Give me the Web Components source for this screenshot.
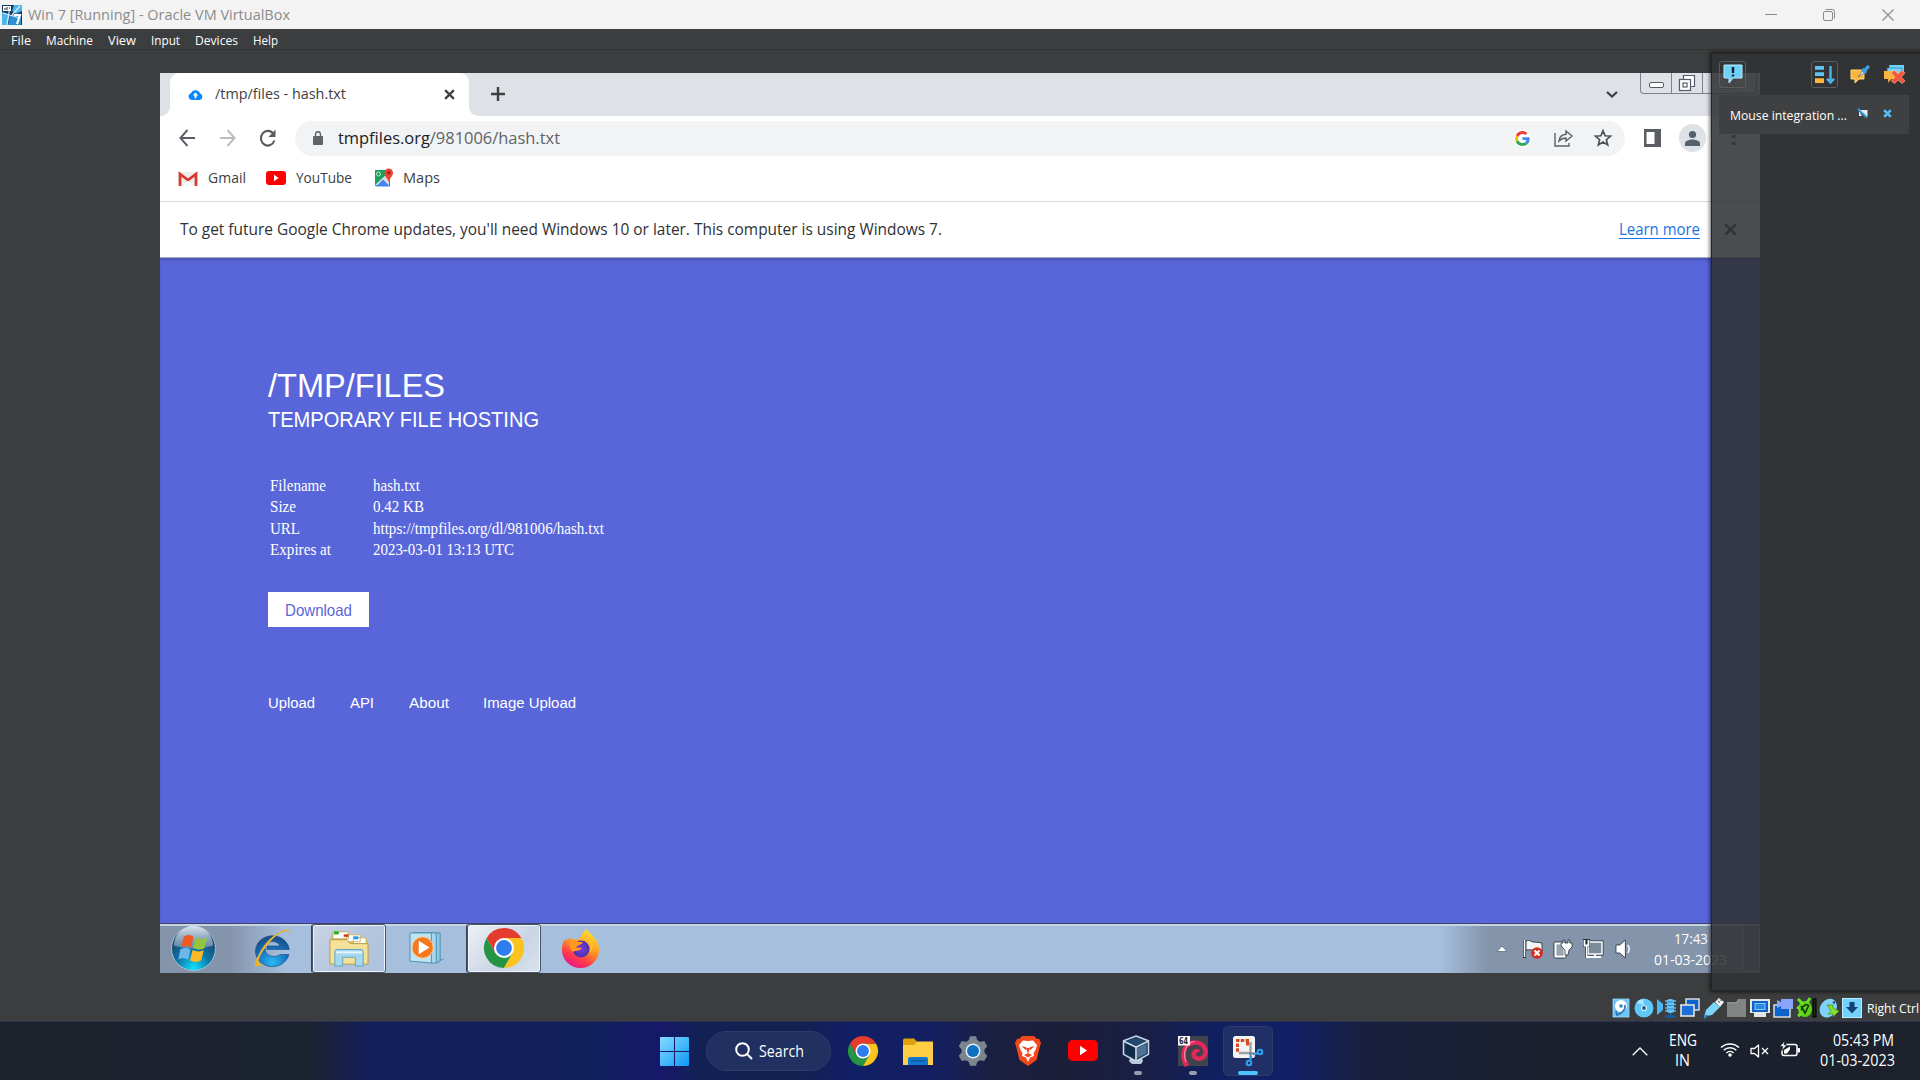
<!DOCTYPE html>
<html lang="en">
<head>
<meta charset="utf-8">
<title>Win 7 [Running] - Oracle VM VirtualBox</title>
<style>
html,body{margin:0;padding:0}
body{width:1920px;height:1080px;overflow:hidden;background:#3c3d3e;font-family:"Open Sans","Noto Sans",sans-serif}
</style>
</head>
<body>
<desk-top></desk-top>
<script>
const ICONS = {
vbwin:['0 0 20 20','<rect width="20" height="20" rx="1" fill="#1565a8"/><path d="M0 0h20v20H0z" fill="#123a5e"/><path d="M0 7l8 3-3 10H0zM12 0h8v6l-6 3-4-3z" fill="#4fb4ea"/><path d="M8 11l5-2 6 3v8H6z" fill="#2f8fd0"/><path d="M8 1L5 20M1 8l17 5M18 1l-8 9" stroke="#d8f0ff" stroke-width="1.2"/><rect x="1" y="1" width="8" height="5" fill="#fff"/><path d="M2 4h2M5 2v3M7 3h1" stroke="#222"/><path d="M12 10h6l-3 9" fill="none" stroke="#fff" stroke-width="2.2"/>'],
min:['0 0 12 12','<path d="M0 5.5h12" stroke="#8a8a8a"/>'],
restore:['0 0 12 12','<rect x=".5" y="2.5" width="9" height="9" rx="1.5" fill="none" stroke="#8a8a8a"/><path d="M2.5 .5h7a2 2 0 0 1 2 2v7" fill="none" stroke="#8a8a8a"/>'],
close:['0 0 12 12','<path d="M.5 .5l11 11M11.5 .5l-11 11" stroke="#8a8a8a" stroke-width="1.1"/>'],
cloud:['0 0 16 12','<path d="M4 12A3.8 3.8 0 0 1 3.3 4.6 5 5 0 0 1 12.8 5 3.6 3.6 0 0 1 12.4 12z" fill="#0a84ff"/><path d="M8 3.6L5 7h2v3h2V7h2z" fill="#fff"/>'],
x:['0 0 10 10','<path d="M1 1l8 8M9 1L1 9" stroke="#3c4043" stroke-width="2"/>'],
plus:['0 0 16 16','<path d="M8 1v14M1 8h14" stroke="#3c4043" stroke-width="2.4"/>'],
back:['0 0 18 18','<path d="M17 9H2M9 1L1.5 9 9 17" fill="none" stroke="#5a5e63" stroke-width="2"/>'],
fwd:['0 0 18 18','<path d="M1 9h15M9 1l7.500 8L9 17" fill="none" stroke="#babcbe" stroke-width="2"/>'],
reload:['0 0 18 18','<path d="M15.300 5A7.300 7.300 0 1 0 16.300 11.500" fill="none" stroke="#5a5e63" stroke-width="2.200"/><path d="M17.500 .5v7.500H10z" fill="#5a5e63"/>'],
lock:['0 0 11 14','<rect y="5" width="11" height="9" rx="1" fill="#5f6368"/><path d="M2.800 6V3.500a2.700 2.700 0 0 1 5.400 0V6" fill="none" stroke="#5f6368" stroke-width="1.500"/>'],
gg:['0 0 48 48','<circle cx="24" cy="24" r="28" fill="#fff"/><path fill="#ea4335" d="M24 9.500c3.500 0 6.700 1.200 9.200 3.600l6.900-6.900C35.900 2.400 30.500 0 24 0 14.600 0 6.500 5.400 2.600 13.200l8 6.200C12.400 13.700 17.700 9.500 24 9.500z"/><path fill="#4285f4" d="M47 24.500c0-1.600-.2-3.100-.4-4.500H24v9h12.900c-.6 3-2.200 5.500-4.700 7.200l7.700 6C44.400 38 47 31.800 47 24.500z"/><path fill="#fbbc05" d="M10.500 28.600a14.500 14.500 0 0 1 0-9.200l-8-6.200a24 24 0 0 0 0 21.600z"/><path fill="#34a853" d="M24 48c6.500 0 11.900-2.100 15.900-5.800l-7.700-6c-2.200 1.500-4.900 2.300-8.200 2.300-6.300 0-11.600-4.200-13.500-9.900l-8 6.200C6.500 42.600 14.600 48 24 48z"/>'],
share:['0 0 19 18','<path d="M1 4v13h14v-3" fill="none" stroke="#5f6368" stroke-width="1.400"/><path d="M5 12c.5-4 3-6.500 7-6.800V2l6 5-6 5V9c-3 0-5 1-7 3z" fill="none" stroke="#5f6368" stroke-width="1.500"/>'],
star:['0 0 18 18','<path d="M9 1.800l2.100 5 5.400.4-4.100 3.500 1.300 5.300L9 13.100 4.300 16l1.300-5.300L1.500 7.200l5.400-.4z" fill="none" stroke="#4f5358" stroke-width="1.700"/>'],
side:['0 0 17 18','<rect width="17" height="18" fill="#5a5e63"/><rect x="2.500" y="3" width="8" height="12" fill="#fff"/>'],
avatar:['0 0 27 28','<ellipse cx="13.500" cy="14" rx="13.500" ry="14" fill="#dee1e6"/><circle cx="13.500" cy="10.500" r="3.600" fill="#55606f"/><path d="M6 22v-2.500c0-3 5-4 7.500-4s7.500 1 7.500 4V22z" fill="#55606f"/>'],
dots:['0 0 5 12','<rect x=".5" width="4" height="3" fill="#5f6368"/><rect x=".5" y="7" width="4" height="3" fill="#5f6368"/>'],
chev:['0 0 12 7','<path d="M1 1l5 4.500L11 1" fill="none" stroke="#3c4043" stroke-width="2.200"/>'],
gmail:['0 0 20 14','<rect x="1" width="18" height="14" fill="#eee"/><path d="M2 14V2l8 6 8-6v12" fill="none" stroke="#d93a30" stroke-width="2.800"/><path d="M4 14l6-5 6 5z" fill="#fafafa"/>'],
yt:['0 0 30 20','<rect width="30" height="20" rx="4.500" fill="#f00"/><path d="M12 5.500v9l7-4.500z" fill="#fff"/>'],
maps:['0 0 20 19','<rect x="1" y="2" width="15" height="16" fill="#1da05a"/><path d="M1 17L15 4v14z" fill="#d8dce0"/><path d="M2 18.500l7-7 7 7z" fill="#4285f4"/><circle cx="4.500" cy="6" r="2" fill="none" stroke="#bfe8cd"/><path d="M14.500 14c-.5-4-4-5-4-9a4 4.300 0 0 1 8.500 0c0 4-4 5-4.500 9z" fill="#ea4335"/><circle cx="14.700" cy="4.800" r="1.500" fill="#8c1d18"/>'],
w7min:['0 0 15 6','<rect x=".5" y=".5" width="14" height="5" rx="1.500" fill="#fff" stroke="#555b66"/>'],
w7res:['0 0 16 16','<path d="M4.500 4V.5h11v11H12" fill="#fff" stroke="#555b66" stroke-width="1.200"/><rect x=".5" y="4.500" width="11" height="11" fill="#fff" stroke="#555b66" stroke-width="1.200"/><rect x="4" y="8" width="4" height="4" fill="#fff" stroke="#555b66" stroke-width="1.200"/>'],
w7x:['0 0 16 12','<path d="M1 1l6 5-6 5h4l3-3 3 3h4l-5-5 5-5h-4L8 4 5 1z" fill="#fff" stroke="#555b66"/>'],
orb:['0 0 46 46','<defs><radialGradient id="ob" cx=".5" cy=".95" r=".95"><stop offset="0" stop-color="#12e0ff"/><stop offset=".4" stop-color="#0c78a8"/><stop offset=".75" stop-color="#1a4a74"/><stop offset="1" stop-color="#0d2c50"/></radialGradient><linearGradient id="og" x2="0" y2="1"><stop offset="0" stop-color="#dbe6ee"/><stop offset="1" stop-color="#7d9bb2" stop-opacity=".7"/></linearGradient></defs><circle cx="23" cy="23" r="22.500" fill="url(#ob)" stroke="#a3c3d6"/><path d="M3 20A20 20 0 0 1 43 20C32 24 14 24 3 20z" fill="url(#og)"/><path d="M13 11c4-3 7-2 10 0l-2.500 11c-3-2-6-2-10.500 0z" fill="#ee5a24"/><path d="M25 12c4 2 8 2 12 0l-3 11c-4 2-8 1-11.500-.5z" fill="#94c53d"/><path d="M9.500 24c4-2 7-2 10.500 0l-2.500 10.500c-3-2-6-2-10 0z" fill="#6db7ea"/><path d="M22 24.500c4 2 8 2 11.500 0L31 35c-4 2.500-8 2-11.500 0z" fill="#fbb829"/>'],
ie:['0 0 40 38','<defs><radialGradient id="ieb" cx=".5" cy=".85" r=".9"><stop offset="0" stop-color="#2cbaf4"/><stop offset=".5" stop-color="#1670be"/><stop offset="1" stop-color="#1b4674"/></radialGradient></defs><path d="M38 25.500A17 15.500 0 1 1 38.300 20.500H16V17H29a7.500 5.500 0 0 0-15 2.500c0 8 10 10 15 6z" fill="url(#ieb)" stroke="#1b4c80" stroke-width=".6"/><path d="M7 27C0 39 6 39 13 35 5 37 7 30 12 22 20 10 30 1 37 2c2 .5 2 3 1 6 4-8-2-10-11-4C18 9 11 18 7 27z" fill="#e9b32c"/>'],
expl:['0 0 42 38','<path d="M2 8l1-4h8l1 2h9l1 3h16l2 3v22H2z" fill="#d9bf63"/><path d="M4 2h16v7H4zM18 5h14v7H18zM25 8h13v6H25z" fill="#fff" stroke="#c5a954" stroke-width=".8"/><rect x="5" y="1.500" width="5" height="3" fill="#18b418"/><rect x="15" y="4.500" width="5" height="2.500" fill="#c43a22"/><rect x="25" y="6.500" width="5" height="3" fill="#1c9af0"/><path d="M1 10h17l4 4h18v21H1z" fill="#f4e299" stroke="#b99a45"/><path d="M6 37V22a2 2 0 0 1 2-2h25a2 2 0 0 1 2 2v15h-8v-9H14v9z" fill="#a6d9ee" stroke="#5da3c2"/><path d="M7 23h27" stroke="#e2f5fd" stroke-width="2"/>'],
wmp:['0 0 38 34','<path d="M20 26l17 2-8 3-18 0z" fill="#7f98b2"/><path d="M8 1h24v29l-5 2z" fill="#8fc7e2" stroke="#4a90b5"/><path d="M4 1h24v31l-5 0z" fill="#a8d8ec" stroke="#4a90b5"/><path d="M1 1h22v31L1 30z" fill="#bfe3f0" stroke="#4a90b5"/><circle cx="14" cy="16" r="11" fill="#f47a20" stroke="#ffd3a8"/><path d="M10 9v14l11-7z" fill="#fff"/>'],
chrome:['0 0 48 48','<path d="M3.200 12A24 24 0 0 0 24 48L34.400 30 24 24 13.600 30z" fill="#249544"/><path d="M44.800 12A24 24 0 0 1 24 48L34.400 30 24 12z" fill="#fcc31e"/><path d="M3.200 12L13.600 30 24 12H44.800A24 24 0 0 0 3.200 12z" fill="#e33b2e"/><circle cx="24" cy="24" r="12" fill="#fff"/><circle cx="24" cy="24" r="9.500" fill="#2f7cf0"/>'],
ff:['0 0 38 40','<defs><linearGradient id="ffg" x1=".8" y1="0" x2=".3" y2="1"><stop offset="0" stop-color="#ffe73a"/><stop offset=".45" stop-color="#ff9a1f"/><stop offset=".75" stop-color="#ff3a4c"/><stop offset="1" stop-color="#e8128a"/></linearGradient><radialGradient id="ffp"><stop offset="0" stop-color="#7a3ce8"/><stop offset="1" stop-color="#4a30a8"/></radialGradient></defs><path d="M24 1c3 4 8 6 9 11l1-1c2 4 3 7 3 11a18.500 18 0 0 1-37 0C0 16 2 12 4 10v3l3-3 8 2c2-1 3-2 4-4 1-3 3-5 5-7z" fill="url(#ffg)"/><circle cx="19" cy="21" r="8.500" fill="url(#ffp)"/><path d="M7 13c4-2 8 0 10 1h4c-1 3-6 3-7 6 2-1 4 0 6 0-3 4-7 2-9 4-3-3-4-7-4-11z" fill="#ff9a1f"/><path d="M24 10c5 3 6 10 4 15 5-5 4-14-4-15z" fill="#ffc32e"/>'],
up:['0 0 12 8','<path d="M1 6.500L6 1l5 5.500z" fill="#fff" stroke="#5f6d80" stroke-width=".8"/>'],
flag:['0 0 20 20','<path d="M1.500 1v18" stroke="#26303c" stroke-width="3"/><path d="M3 2c4-2 6 2 9 1l7 1v8c-5 1-8-2-16-1z" fill="#f4f4f4" stroke="#3b4654"/><path d="M1.500 1v17" stroke="#fff" stroke-width="1.500"/><circle cx="14" cy="14" r="5.800" fill="#d8281c"/><path d="M11.500 11.500l5 5M16.500 11.500l-5 5" stroke="#fff" stroke-width="2.200"/>'],
plug:['0 0 19 20','<rect x="1" y="3" width="12" height="16" rx="1.500" fill="#b4bdc8" stroke="#26303c" stroke-width="1"/><rect x="2.500" y="4.500" width="9" height="13" fill="#97a4b4" stroke="#fff" stroke-width="1.800"/><path d="M8 6V4h2V1h1.800v3H15V1h1.800v3H19v4l-3 3-1 5h-3v-5L9 8z" fill="#fff" stroke="#26303c" stroke-width=".8"/>'],
net:['0 0 20 20','<rect x="5" y="3" width="14" height="12" fill="#7c8b9c" stroke="#26303c" stroke-width="3"/><rect x="5" y="3" width="14" height="12" fill="#7c8b9c" stroke="#fff" stroke-width="1.500"/><path d="M7 18h11M12 15v3" stroke="#fff" stroke-width="1.800"/><path d="M0 0h7v8H5v11H2V8H0z" fill="#26303c"/><path d="M1.500 1v5.500h4V1M3.700 7v11h4" fill="none" stroke="#fff" stroke-width="1.800"/>'],
vol7:['0 0 18 20','<path d="M1 6h4l6-5v18l-6-5H1z" fill="#fff" stroke="#3b4654"/><path d="M13.500 6q3 4 0 8" fill="none" stroke="#fff" stroke-width="1.500"/>'],
bub:['0 0 20 20','<path d="M1 1h18v13H10l-4 5v-5H1z" fill="#6fd0f8" stroke="#b6eaff"/><path d="M10 3v6M10 10.500v2" stroke="#10202c" stroke-width="2.400"/>'],
sort:['0 0 20 20','<path d="M0 1h9v4H0zM0 7.500h9v4H0z" fill="#5fc4f4"/><path d="M0 14h9v5H0z" fill="#fdb53c"/><path d="M15.500 1v15M12 14.500l3.500 4 3.500-4" fill="none" stroke="#4ab6f0" stroke-width="2.400"/>'],
pen:['0 0 20 20','<path d="M1 6h13v9H9l-4 4v-4H1z" fill="#fdb53c" stroke="#ffd982"/><path d="M8 13l5-7 3 2z" fill="#eee" stroke="#6a7078" stroke-width=".8"/><path d="M12 5l4 4M14 7l5-5" stroke="#3a9ee0" stroke-width="3.200"/>'],
clr:['0 0 20 20','<path d="M5 1h14v8H5z" fill="#6fd0f8"/><path d="M3 4h14v8H3z" fill="#7bd4fa" stroke="#2d7fb0" stroke-width=".8"/><path d="M0 7h12v8H7l-3 4v-4H0z" fill="#fdb53c"/><path d="M7 9l3-2.500 3.500 3.500L17 6.500l3 2.500-3.500 4 3.500 4-3 2.500-3.500-3.500L10 19.500 7 17l3.500-4z" fill="#f4573a" stroke="#ffa28c" stroke-width=".7"/>'],
pin:['0 0 10 9','<path d="M1 1h8.500v7z" fill="#e6eef4"/><path d="M1 2v5h3z" fill="#dfe8f0"/><path d="M0 0l9 8.500" stroke="#3ba2e6" stroke-width="1.800"/>'],
bx:['0 0 9 9','<path d="M1.200 1.200l6.600 6.600M7.800 1.200L1.200 7.800" stroke="#52c0f5" stroke-width="2.600"/>'],
hdd:['0 0 20 20','<rect x="2" y="1" width="16" height="18" fill="#6cc5f6" stroke="#a8e4ff" stroke-width=".7"/><circle cx="10" cy="8" r="6" fill="#fff"/><circle cx="10" cy="8" r="1.800" fill="#2b86cd"/><path d="M14 7c1 5-3 8-8 10l-1-4" stroke="#2b78bd" stroke-width="1.800" fill="none"/>'],
disc:['0 0 20 20','<circle cx="10" cy="10" r="9.500" fill="#5fc8f6"/><path d="M3 5a9 9 0 0 1 6-4l1 6z" fill="#aee8ff"/><circle cx="10" cy="10" r="2.500" fill="#1a5c92" stroke="#d8f4ff" stroke-width="1.200"/>'],
aud:['0 0 20 20','<path d="M0 1l6 5v6l-6 5z" fill="#4bb8f4"/><path d="M8 3h11M8 6.500h11M8 10h11M8 13h11" stroke="#58bdf4" stroke-width="1.300"/><rect x="10" y="1" width="7" height="14" rx="3" fill="#67c8f8"/><path d="M10.500 4h6M10.500 7.500h6M10.500 11h6" stroke="#2277bd" stroke-width=".9"/><path d="M13.500 15v3M8 18.500h11" stroke="#0d5fb4" stroke-width="2"/>'],
nets:['0 0 20 20','<rect x="6" y="1" width="13" height="11" fill="#0d63cc" stroke="#e4e4e4" stroke-width="1.400"/><rect x="1" y="7" width="13" height="11" fill="#1c6fd6" stroke="#e4e4e4" stroke-width="1.600"/>'],
usb:['0 0 20 20','<path d="M0 19l2-7 8-8 6 5-8 8-6 1z" fill="#7bd6fb"/><path d="M11 4l4-4 5 4-4 5z" fill="#f2f2f2"/><path d="M14 3l2 1.500M16 1.500l1.500 1.500" stroke="#333"/><path d="M0 20l3-3" stroke="#2a8ad4" stroke-width="2"/>'],
fold:['0 0 20 20','<path d="M0 4h9l2-3h8v18H0z" fill="#828484"/><path d="M0 5h10l2-3" stroke="#969898" fill="none"/>'],
disp:['0 0 20 20','<path d="M0 1h20v14h-4v4H4v-4H0z" fill="#e6e6e6"/><rect x="2" y="3" width="16" height="11" fill="#0d63cc"/><rect x="5" y="5.500" width="10" height="6" fill="#2b86e6" stroke="#8cc8ff"/>'],
rec:['0 0 20 20','<rect x="1" y="7" width="16" height="12" fill="#0d63cc" stroke="#e4e4e4" stroke-width="1.400"/><path d="M8 1h12v10H8V8L4 10V2l4 2z" fill="#8aa3fb"/>'],
turt:['0 0 20 20','<ellipse cx="9" cy="11" rx="7" ry="8" fill="#5fd01c"/><path d="M2 1l5 5M14 0l-3 5M1 9l4 2M2 18l4-3" stroke="#6be020" stroke-width="3"/><path d="M5 8l4 7 4-8M5 12q4-8 8-4" fill="none" stroke="#153c05" stroke-width="1.600"/><rect x="17" y="1" width="3" height="18" fill="#142c08" stroke="#000"/>'],
mouse:['0 0 20 20','<ellipse cx="9.500" cy="10.500" rx="8" ry="10" transform="rotate(35 10 10)" fill="#7fd2f8"/><circle cx="15" cy="4.500" r="1.200" fill="#124a7c"/><path d="M8 7h6v3l6 3-6 6v-3H9l3-3z" fill="#86e02e" stroke="#3a7c10" stroke-width=".6"/>'],
dn:['0 0 20 20','<rect x=".5" y=".5" width="19" height="19" fill="#74d2fa" stroke="#b9ecff"/><path d="M7.500 4h5v5h3.500l-6 6.500L4 9h3.500z" fill="#12427a"/>'],
win11:['0 0 29 29','<defs><linearGradient id="wg" x2="1" y2="1"><stop offset="0" stop-color="#86dcff"/><stop offset="1" stop-color="#0c98f6"/></linearGradient></defs><path d="M0 1a1 1 0 0 1 1-1h13v14H0zM15 0h13a1 1 0 0 1 1 1v13H15zM0 15h14v14H1a1 1 0 0 1-1-1zM15 15h14v13a1 1 0 0 1-1 1H15z" fill="url(#wg)"/>'],
mag:['0 0 18 18','<circle cx="7.500" cy="7.500" r="6.300" fill="none" stroke="#fff" stroke-width="2"/><path d="M12 12l5 5" stroke="#fff" stroke-width="2"/>'],
folder:['0 0 30 27','<path d="M0 2a1.500 1.500 0 0 1 1.500-1.500H10l3 3.500H0z" fill="#dca010"/><path d="M0 6h11l3-2.500h16V27H0z" fill="#ffce45"/><path d="M0 2v5h11l3-3.500-3-3z" fill="#e0a10e"/><path d="M5 27v-6a2 2 0 0 1 2-2h16a2 2 0 0 1 2 2v6z" fill="#1276d0"/><path d="M8 22.800h14" stroke="#0b4e90" stroke-width="1.200"/>'],
gear:['0 0 30 30','<g fill="#7b858e"><circle cx="15" cy="15" r="11.500"/><path d="M10.500 5L12 .3h6L19.500 5zM10.500 25l1.500 4.700h6l1.500-4.700z"/><path d="M10.500 5L12 .3h6L19.500 5zM10.500 25l1.500 4.700h6l1.500-4.700z" transform="rotate(60 15 15)"/><path d="M10.500 5L12 .3h6L19.500 5zM10.500 25l1.500 4.700h6l1.500-4.700z" transform="rotate(120 15 15)"/></g><circle cx="15" cy="15" r="7.500" fill="#e6eef5"/><circle cx="15" cy="15" r="6" fill="#0f6fc0"/>'],
brave:['0 0 26 30','<path d="M7 0h12l3 3 2-.3L26 7l-1 3-3.500 14L13 30l-8.500-6L1 10 0 7l2-4.300L4 3z" fill="#f4471c"/><path d="M13 5l5-.6 4 4.600-1.500 5-2 3 .5 3-4 1.500L13 26l-2-4.500L7 20l.5-3-2-3L4 9l4-4.600z" fill="#fff"/><path d="M6.500 10l5 1.300-.7 3zM19.500 10l-5 1.300.7 3zM11 12l2 6 2-6M9 19l4-2 4 2-4 2.500z" fill="#f4471c"/>'],
vbox:['0 0 26 30','<path d="M7 22l6 3 6-3 1 4-2 3H9l-3-3z" fill="#b9c8da"/><path d="M13 0l12.500 5v14L13 26 .5 19V5z" fill="#1d3a5c" stroke="#c9d8e8" stroke-width="1.500"/><path d="M13 2l10 4-10 5L3 6z" fill="#26496f"/><path d="M2.500 8L12 12.500V23l-9.500-5z" fill="#0f2946"/><path d="M23.500 8L14 12.500V23l9.500-5z" fill="#4e7298"/><path d="M1 5.500l12 6 12-6M13 11.500V25" fill="none" stroke="#dde8f2" stroke-width="1.500"/>'],
deb:['0 0 30 30','<rect width="30" height="30" fill="#41434a"/><path d="M9 30C2 19 6 6.500 17 6.500c10 0 13 10 8.500 14.500-4.500 3.500-11 1-9.500-4 1-2.500 3.500-2.500 4.500-1" fill="none" stroke="#e2285a" stroke-width="4.500"/><path d="M8 26C4 15 9 6 17 5.500" fill="none" stroke="#f38ba4" stroke-width="1.200"/><rect width="12" height="9.500" fill="#fff"/>'],
snip:['0 0 30 30','<rect width="22" height="22" rx="2.500" fill="#f4f4f4"/><path d="M3 4.500h13M4.500 7.500v9M14.500 6v4" fill="none" stroke="#d8481c" stroke-width="3" stroke-dasharray="3.400 1.400"/><path d="M17.500 6v12M6 17h12" stroke="#9aa0a6" stroke-width="2.400"/><path d="M16 17.500h7M17.500 17v6" stroke="#6c7f90" stroke-width="2"/><circle cx="27" cy="16" r="2.300" fill="none" stroke="#2ea2ee" stroke-width="2"/><circle cx="16" cy="27" r="2.300" fill="none" stroke="#2ea2ee" stroke-width="2"/><path d="M20 18.500l5-1.500M18.500 20l-1.500 5" stroke="#2ea2ee" stroke-width="2"/>'],
up11:['0 0 16 9','<path d="M.7 8.300L8 1l7.300 7.300" fill="none" stroke="#fff" stroke-width="1.300"/>'],
wifi:['0 0 20 15','<path d="M1 5.500a13 13 0 0 1 18 0M3.700 8.300a9 9 0 0 1 12.600 0M6.400 11a5.200 5.200 0 0 1 7.200 0" fill="none" stroke="#fff" stroke-width="1.500"/><circle cx="10" cy="13" r="1.800" fill="#fff"/>'],
mute:['0 0 19 14','<path d="M1 4.500h3.500L8.500 1v12L4.500 9.500H1z" fill="none" stroke="#fff" stroke-width="1.300" stroke-linejoin="round"/><path d="M12 4l6 6M18 4l-6 6" stroke="#fff" stroke-width="1.300"/>'],
bat:['0 0 20 16','<path d="M6 3.500h9a2 2 0 0 1 2 2v7a2 2 0 0 1-2 2H4a2 2 0 0 1-2-2V9" fill="none" stroke="#fff" stroke-width="1.500"/><path d="M18 7.500h1.500v3.500H18z" fill="#fff" stroke="#fff"/><path d="M4 12.500V9l6-3.500v3l-3 4z" fill="#fff"/><path d="M4.500 0L0 5.500h3L1.500 10 7 4H4z" fill="#fff" stroke="#1b212c" stroke-width=".6"/>']
};
class UiIcon extends HTMLElement{
  connectedCallback(){
    if(this.shadowRoot) return;
    const [vb,body]=ICONS[this.getAttribute('name')];
    const w=this.getAttribute('w'),h=this.getAttribute('h');
    this.attachShadow({mode:'open'}).innerHTML=`<style>:host{display:block;flex:none;width:${w}px;height:${h}px}svg{display:block;width:100%;height:100%;overflow:visible}</style><svg viewBox="${vb}" preserveAspectRatio="none">${body}</svg>`;
  }
}
customElements.define('ui-icon',UiIcon);

/* Text run condensed or widened to an exact advance width. */
const runs=[];
class UiText extends HTMLElement{
  connectedCallback(){
    if(this.shadowRoot) return;
    this.attachShadow({mode:'open'}).innerHTML=`<style>:host{display:block;flex:none;width:${this.getAttribute('w')}px;white-space:nowrap;line-height:20px}span{display:inline-block;transform-origin:0 50%}</style><span><slot></slot></span>`;
    runs.push(this);
  }
  fit(){
    const s=this.shadowRoot.querySelector('span');
    const n=s.getBoundingClientRect().width;
    if(n) s.style.transform=`scaleX(${this.getAttribute('w')/n})`;
  }
}
customElements.define('ui-text',UiText);

const I=(n,w,h,ml=0,mt=0)=>`<ui-icon name="${n}" w="${w}" h="${h}" style="margin:${mt}px 0 0 ${ml}px"></ui-icon>`;
const T=(t,w,ml=0,extra='')=>`<ui-text w="${w}" style="margin-left:${ml}px;${extra}">${t}</ui-text>`;
const UP='margin-top:-1px';
const def=(tag,css,html)=>customElements.define(tag,class extends HTMLElement{
  connectedCallback(){ if(!this.shadowRoot) this.attachShadow({mode:'open'}).innerHTML=`<style>*{box-sizing:border-box}${css}</style>${html}`; }
});

def('vb-titlebar',':host{display:flex;align-items:center;height:29px;background:#f3f3f3;color:#8b8b8b;font-size:14.500px}',
  I('vbwin',20,20,2)+T('Win 7 [Running] - Oracle VM VirtualBox',262,6)+I('min',12,12,1475)+I('restore',12,12,46)+I('close',12,12,47));

def('vb-menubar',':host{display:flex;align-items:center;height:21px;box-sizing:border-box;padding-top:2px;background:#3c3d3e;border-bottom:1px solid #333435;color:#fff;font-size:13px}',
  T('File',20,11)+T('Machine',47,15)+T('View',28,15)+T('Input',29,15)+T('Devices',43,15)+T('Help',25,15));

def('chrome-tabs',`:host{display:flex;height:43px;background:#dee1e6;color:#3c4043;font-size:14.500px}
.tab{display:flex;align-items:center;width:299px;height:43px;margin-left:10px;background:#fff;border-radius:9px 9px 0 0;position:relative}
.tab:before,.tab:after{content:"";position:absolute;bottom:0;width:9px;height:9px}
.tab:before{left:-9px;background:radial-gradient(circle at 0 0,transparent 8.500px,#fff 9px)}
.tab:after{right:-9px;background:radial-gradient(circle at 100% 0,transparent 8.500px,#fff 9px)}
.cap{display:flex;height:21px;margin-left:22px;border:1px solid #7e838b;border-top:0;border-radius:0 0 4px 4px;background:#dee1e6}
.cap div{display:flex;align-items:center;justify-content:center;width:31px;border-right:1px solid #7e838b}.cap div:last-child{border:0;width:53px}`,
`<div class="tab">${I('cloud',15,11,18)}${T('/tmp/files - hash.txt',131,12,UP)}${I('x',11,11,98)}</div>`+
I('plus',16,16,21,13)+I('chev',12,7,1100,18)+
`<div class="cap"><div>${I('w7min',15,6,0,4)}</div><div>${I('w7res',16,16)}</div><div>${I('w7x',16,12)}</div></div>`);

def('chrome-toolbar',`:host{display:flex;align-items:center;height:44px;background:#fff;color:#202124;font-size:16.500px}
.omni{display:flex;align-items:center;width:1330px;height:35px;margin-left:19px;border-radius:18px;background:#f1f3f4}em{font-style:normal;color:#5f6368}`,
I('back',17,18,19)+I('fwd',17,18,23)+I('reload',17,18,23)+
`<div class="omni">${I('lock',10,14,18,-1)}${T('tmpfiles.org<em>/981006/hash.txt</em>',222,15,UP)}${I('gg',15,15,955)}${I('share',19,18,24)}${I('star',18,18,21)}</div>`+
I('side',17,18,19)+I('avatar',27,28,18)+I('dots',5,12,25,6));

def('bookmarks-bar',':host{display:flex;align-items:center;height:42px;padding-bottom:6px;background:#fff;border-bottom:1px solid #d6d8db;color:#3c4043;font-size:14.500px}',
I('gmail',20,14,18,2)+T('Gmail',38,10)+I('yt',20,14,20,1)+T('YouTube',56,10)+I('maps',20,19,22,-1)+T('Maps',37,9));

def('update-bar',':host{display:flex;align-items:center;height:56px;background:#fff;color:#303134;font-size:15.500px;border-bottom:1px solid #a9adc0}a{color:#1a73e8;text-decoration:underline;text-underline-offset:3px}',
T("To get future Google Chrome updates, you'll need Windows 10 or later. This computer is using Windows 7.",762,20,'margin-top:-2px')+T('<a>Learn more</a>',81,677,'margin-top:-2px')+I('x',13,13,24));

def('file-page',`:host{display:block;box-sizing:border-box;height:665px;padding:109px 0 0 108px;background:#5966da;color:#fff;box-shadow:inset 0 3px 3px -1px #4853b4}
h1,h2{margin:0;font-weight:400;font-family:"Liberation Sans",Arial,sans-serif}
h1{font-size:33.500px;height:38px;padding-top:9px}h2{font-size:21.300px;height:31px;padding-top:5px}
dl{margin:40px 0 0 2px;font:16px "Liberation Serif","Times New Roman",serif;display:grid;grid-template-columns:103px auto;grid-auto-rows:21.300px}dt,dd{margin:0}
.btn{display:flex;align-items:center;width:101px;height:35px;margin-top:31px;background:#fff;color:#5966da;font:16.500px "Liberation Sans",Arial,sans-serif}
nav{display:flex;margin-top:66px;font:15.500px "Liberation Sans",Arial,sans-serif}`,
`<h1>${T('/TMP/FILES',177)}</h1><h2>${T('TEMPORARY FILE HOSTING',271)}</h2>
<dl><dt>${T('Filename',56)}</dt><dd>${T('hash.txt',47)}</dd><dt>${T('Size',26)}</dt><dd>${T('0.42 KB',51)}</dd><dt>${T('URL',30)}</dt><dd>${T('https://tmpfiles.org/dl/981006/hash.txt',231)}</dd><dt>${T('Expires at',61)}</dt><dd>${T('2023-03-01 13:13 UTC',141)}</dd></dl>
<div class="btn">${T('Download',67,17)}</div><nav>${T('Upload',47)}${T('API',24,35)}${T('About',40,35)}${T('Image Upload',93,34)}</nav>`);

def('win7-taskbar',`:host{display:flex;box-sizing:border-box;align-items:center;height:50px;border-top:1px solid #3c4668;box-shadow:inset 0 2px #c5d3e5;color:#fff;font-size:15px;
background:linear-gradient(90deg,#8494ab 0,#8494ab 70px,#a5bfdd 125px,#a5bfdd 1280px,#8494ab 1328px,#8494ab 1600px)}
.b{display:flex;flex:none;align-items:center;justify-content:center;width:74px;height:49px;border:1px solid #4a5468;border-radius:3px;box-shadow:inset 0 0 0 1px #eef4fa,-1px 0 #3a4356;background:linear-gradient(135deg,#cbd6e6,#b4c5dd 55%,#aec2de)}
.on{background:linear-gradient(135deg,#eef1f6,#c9d5e5 60%,#d8e2ee)}.clk{display:flex;flex:none;flex-direction:column;width:74px;margin-left:22px}.clk ui-text{line-height:21px}
.show{flex:none;width:17px;height:47px;margin-left:15px;border:1px solid #a9b8cc;background:#74849c}`,
I('orb',45,45,11)+I('ie',40,38,35,-1)+`<div class="b" style="margin-left:21px">${I('expl',41,37)}</div>`+I('wmp',37,33,23)+`<div class="b on" style="margin-left:21px">${I('chrome',40,40,0,-2)}</div>`+I('ff',38,40,21,-1)+
I('up',12,8,896)+I('flag',20,20,15)+I('plug',19,20,10)+I('net',20,20,11)+I('vol7',17,20,12)+`<div class="clk">${T('17:43',34,20)}${T('01-03-2023',73)}</div><div class="show"></div>`);

def('vm-screen',':host{display:block;width:1600px;height:900px;margin:23px 0 0 160px}',
'<chrome-tabs></chrome-tabs><chrome-toolbar></chrome-toolbar><bookmarks-bar></bookmarks-bar><update-bar></update-bar><file-page></file-page><win7-taskbar></win7-taskbar>');

def('vb-statusbar',':host{display:flex;box-sizing:border-box;align-items:center;gap:3.150px;height:48px;padding:22px 0 0 1611px;color:#fff;font-size:13px}',
['hdd','disc','aud','nets','usb','fold','disp','rec','turt','mouse','dn'].map(n=>I(n,20,20)).join('')+T('Right Ctrl',52,1));

def('vb-notices',`:host{display:block;box-sizing:border-box;position:absolute;left:1711px;top:53px;width:213px;height:938px;background:rgba(48,49,50,.87);border:1px solid #242526;box-shadow:0 0 4px 1px rgba(0,0,0,.65)}
.bar{display:flex;align-items:center;padding-top:7px}.k{display:flex;align-items:center;justify-content:center;width:27px;height:27px;border:1px solid #5a5b5c;border-radius:3px}
.row{display:flex;align-items:center;width:190px;height:39px;margin:7px 0 0 7px;background:#3f4041;color:#fff;font-size:13px}`,
`<div class="bar"><div class="k" style="margin-left:7px">${I('bub',20,20,0,-1)}</div><div class="k" style="margin-left:65px">${I('sort',20,19,0,-1)}</div>${I('pen',20,20,12,-2)}${I('clr',21,20,14,-1)}</div>
<div class="row">${T('Mouse integration ...',117,11)}${I('pin',10,9,11,-3)}${I('bx',9,9,15,-2)}</div>`);

def('win11-taskbar',`:host{display:flex;box-sizing:border-box;align-items:center;height:59px;border-top:1px solid #2c3252;color:#fff;font-size:15.500px;
background:linear-gradient(90deg,#1c222b 0,#1b2230 310px,#131f58 365px,#10205c 600px,#16186a 660px,#122154 700px,#13214f 790px,#111f64 850px,#141f62 930px,#1b1f42 990px,#1c1e38 1060px,#181f48 1160px,#10205f 1210px,#112066 1290px,#181f3c 1370px,#1a202e 1540px,#1c212b 1920px)}
.s{display:flex;flex:none;align-items:center;width:125px;height:40px;margin-left:17px;border-radius:20px;background:#203061;border:1px solid #2c3b6c}
.app{display:flex;flex:none;flex-direction:column;align-items:center;width:50px;height:50px;justify-content:center;border-radius:5px;margin-left:5px;position:relative}
.app i{position:absolute;bottom:1px;left:21px;width:8px;height:4px;border-radius:2px;background:#9a9cae}
.on{background:#202f66;border:1px solid #2d3a6c}.on i{left:14px;width:20px;background:#4cc2ff;bottom:0}
.c{display:flex;flex-direction:column;margin-top:-2px}.d{font:bold 9px/10px "DejaVu Sans",sans-serif;color:#222;position:absolute;left:11px;top:10px}`,
I('win11',29,29,660)+`<div class="s">${I('mag',18,18,28,-1)}${T('Search',45,6,UP)}</div>`+
`<div class="app" style="margin-left:7px">${I('chrome',30,30,0,-1)}</div><div class="app">${I('folder',30,27)}</div><div class="app">${I('gear',30,30,0,-1)}</div><div class="app">${I('brave',26,30,0,-1)}</div><div class="app">${I('yt',30,21,0,-1)}</div><div class="app">${I('vbox',26,29,-4,-1)}<i></i></div><div class="app">${I('deb',30,30,0,-1)}<div class="d">${T('64',9,0,'line-height:10px')}</div><i></i></div><div class="app on">${I('snip',30,30)}<i></i></div>`+
I('up11',16,9,359)+`<div class="c" style="margin-left:21px">${T('ENG',28)}${T('IN',15,6)}</div>`+I('wifi',20,15,23,-3)+I('mute',19,14,10,-1)+I('bat',20,16,11,-4)+
`<div class="c" style="margin-left:20px">${T('05:43 PM',61,13)}${T('01-03-2023',75)}</div>`);

def('desk-top',':host{display:block;width:1920px;height:1080px;overflow:hidden;position:relative;background:#3c3d3e}',
'<vb-titlebar></vb-titlebar><vb-menubar></vb-menubar><vm-screen></vm-screen><vb-statusbar></vb-statusbar><win11-taskbar></win11-taskbar><vb-notices></vb-notices>');
runs.forEach(r=>r.fit());
</script>
</body>
</html>
